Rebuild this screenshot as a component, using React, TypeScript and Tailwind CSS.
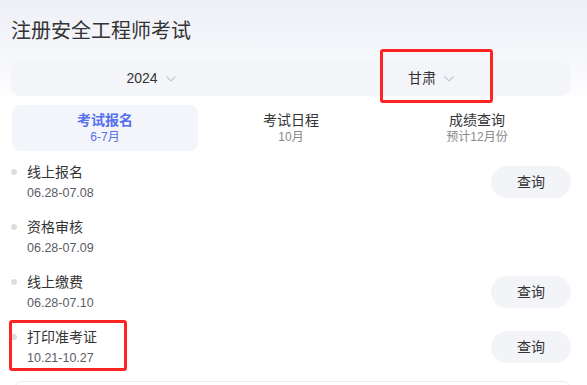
import React from 'react';

const Chevron: React.FC = () => (
  <svg width="10" height="6" viewBox="0 0 10 6" className="ml-[8px] text-[#c3c7d0]" fill="none" stroke="currentColor" strokeWidth="1.1">
    <polyline points="0.5,0.5 5,5 9.5,0.5" />
  </svg>
);

const tabs = [
  { title: '考试报名', sub: '6-7月', active: true },
  { title: '考试日程', sub: '10月', active: false },
  { title: '成绩查询', sub: '预计12月份', active: false },
];

const steps = [
  { title: '线上报名', date: '06.28-07.08', query: true },
  { title: '资格审核', date: '06.28-07.09', query: false },
  { title: '线上缴费', date: '06.28-07.10', query: true },
  { title: '打印准考证', date: '10.21-10.27', query: true },
];

const App: React.FC = () => {
  return (
    <div
      className="relative w-[587px] h-[385px] overflow-hidden bg-white text-[#333]"
      style={{ fontFamily: '"Liberation Sans", "Noto Sans CJK SC", sans-serif' }}
    >
      {/* header */}
      <div className="bg-[linear-gradient(180deg,#eef0f7_0%,#f6f7fb_55%,#ffffff_100%)] pt-[17px] px-[11px] pb-[8px]">
        <h1 className="text-[20px] leading-[28px] text-[#333]">注册安全工程师考试</h1>
        <div className="mt-[16px] w-[560px] h-[35px] rounded-[10px] bg-[#f4f5f9] flex text-[14px] text-[#333]">
          <div className="flex-1 flex items-center justify-center">
            <span>2024</span>
            <Chevron />
          </div>
          <div className="flex-1 flex items-center justify-center">
            <span>甘肃</span>
            <Chevron />
          </div>
        </div>
      </div>

      {/* tabs */}
      <div className="ml-[12px] w-[558px] grid grid-cols-3 h-[46px] mt-[1px]">
        {tabs.map((t) => (
          <div
            key={t.title}
            className={`flex flex-col items-center justify-center rounded-[8px] ${t.active ? 'bg-[#f3f5fa]' : ''}`}
          >
            <span className={`text-[14px] leading-[18px] ${t.active ? 'font-bold text-[#5470ee]' : 'text-[#333]'}`}>{t.title}</span>
            <span className={`text-[12px] leading-[17px] ${t.active ? 'text-[#5470ee]' : 'text-[#888]'}`}>{t.sub}</span>
          </div>
        ))}
      </div>

      {/* steps */}
      <div className="mt-[11px] pl-[11px] pr-[16px]">
        {steps.map((s) => (
          <div key={s.title} className="h-[40px] mb-[15px] flex items-center justify-between">
            <div className="flex flex-col">
              <div className="flex items-center h-[20px] mt-[1px]">
                <span className="w-[6px] h-[6px] rounded-full bg-[#dcdde1]" />
                <span className="ml-[10px] text-[14px] text-[#333]">{s.title}</span>
              </div>
              <span className="ml-[16px] mt-[1px] h-[20px] leading-[20px] text-[12.5px] text-[#5c5c66]">{s.date}</span>
            </div>
            {s.query && (
              <button className="w-[80px] h-[32px] rounded-full bg-[#f3f4f8] text-[14px] text-[#333]">查询</button>
            )}
          </div>
        ))}
        <div className="-mt-[1px] ml-[4px] w-[555px] h-[40px] rounded-[6px] border border-[#e6ebf5] flex items-start pt-[2px] text-[14px]">
          <span className="ml-[55px] text-[#3b6cf0] underline">报名入口</span>
          <span className="ml-[25px] text-[#333]">报名指南</span>
        </div>
      </div>

      {/* annotation boxes */}
      <div className="absolute left-[380px] top-[49px] w-[113px] h-[54px] border-[3px] border-[#ff2424] rounded-[3px]" />
      <div className="absolute left-[9px] top-[320px] w-[118px] h-[51px] border-[3px] border-[#ff2424] rounded-[3px]" />
    </div>
  );
};

export default App;
